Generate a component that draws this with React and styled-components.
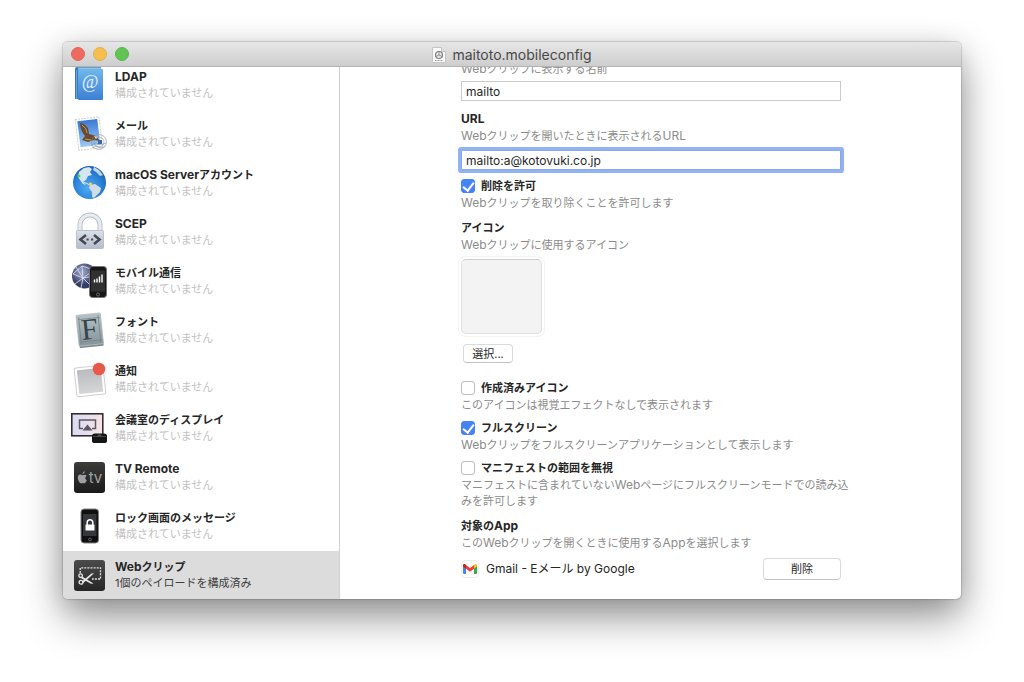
import React, { useState } from 'react';
import styled, { createGlobalStyle, css } from 'styled-components';

const GlobalStyle = createGlobalStyle`
  * {
    box-sizing: border-box;
  }

  body {
    margin: 0;
    background: #fff;
    color: #262626;
    font-family: Inter, 'Noto Sans CJK JP', sans-serif;
    font-size: 11px;
    line-height: 16px;
  }

  button,
  input {
    font-family: inherit;
    color: inherit;
  }
`;

const Desktop = styled.div`
  min-height: 100vh;
  padding: 42px 63px 82px;
`;

const Window = styled.main`
  overflow: hidden;
  border-radius: 5px;
  background: #fff;
  box-shadow:
    0 0 1px 1px rgba(0, 0, 0, 0.14),
    0 18px 40px rgba(0, 0, 0, 0.42),
    0 4px 24px rgba(0, 0, 0, 0.1);
`;

const TitleBar = styled.header`
  position: relative;
  z-index: 1;
  display: grid;
  grid-template-columns: 1fr auto 1fr;
  align-items: center;
  height: 25px;
  padding: 0 8px;
  border-bottom: 1px solid #b3b3b3;
  background: linear-gradient(#e6e6e6, #cecece);
`;

const Lights = styled.div`
  display: flex;
  gap: 8px;
`;

const Light = styled.button`
  width: 14px;
  height: 14px;
  padding: 0;
  border: 1px solid ${({ $edge }) => $edge};
  border-radius: 50%;
  background: ${({ $fill }) => $fill};
`;

const Title = styled.h1`
  display: flex;
  align-items: center;
  gap: 6px;
  margin: 0;
  padding-top: 2px;
  color: #484848;
  font-size: 14px;
  font-weight: 400;
`;

const Body = styled.div`
  display: flex;
  overflow: hidden;
`;

const Sidebar = styled.nav`
  flex: 0 0 277px;
  margin-top: -7px;
  border-right: 1px solid #d0d0d0;
`;

const PayloadList = styled.ul`
  margin: 0;
  padding: 0;
  list-style: none;
`;

const Payload = styled.a`
  display: flex;
  align-items: center;
  gap: 5px;
  height: 49px;
  padding: 0 8px;
  color: inherit;
  text-decoration: none;

  ${({ $selected }) =>
    $selected &&
    css`
      height: 48px;
      margin-top: 1px;
      background: #dcdcdc;
    `}
`;

const PayloadIcon = styled.svg`
  flex: none;
  width: 39px;
  height: 40px;
`;

const PayloadName = styled.strong`
  display: block;
  font-weight: 700;
`;

const PayloadStatus = styled.span`
  display: block;
  color: ${({ $selected }) => ($selected ? '#404040' : '#c2c2c2')};
`;

const Latin = styled.span`
  font-size: 12px;
`;

const Settings = styled.form`
  flex: 1;
  min-width: 0;
  margin-top: -6px;
  padding: 0 99px 19px 121px;
`;

const Group = styled.div`
  margin-bottom: ${({ $space }) => $space || 8}px;
`;

const Label = styled.label`
  display: block;
  font-weight: 700;
  line-height: 18px;
`;

const CheckLabel = styled(Label)`
  display: flex;
  align-items: center;
  gap: 6px;
`;

const Hint = styled.p`
  max-width: 396px;
  margin: 0;
  color: #8b8b8b;
`;

const TextField = styled.input`
  display: block;
  width: 100%;
  max-width: 380px;
  height: 20px;
  margin-top: ${({ $focused }) => ($focused ? 6 : 4)}px;
  padding: 0 4px;
  border: 1px solid #cbcbcb;
  border-radius: 0;
  outline: none;
  background: #fff;
  font-size: 12px;

  ${({ $focused }) =>
    $focused &&
    css`
      border-color: #8aa8ea;
      box-shadow: 0 0 0 3px #93b2f4;
      border-radius: 1px;
    `}
`;

const Checkbox = styled.input`
  flex: none;
  display: grid;
  place-items: center;
  width: 14px;
  height: 14px;
  margin: 0;
  border: 1px solid #bdbdbd;
  border-radius: 3px;
  background: #fff;
  appearance: none;

  &:checked {
    border-color: #4684f6;
    background: #4684f6;
  }

  &:checked::before {
    content: '';
    width: 5px;
    height: 9px;
    margin-bottom: 2px;
    border: solid #fff;
    border-width: 0 2px 2px 0;
    transform: rotate(38deg);
  }
`;

const IconWell = styled.div`
  width: 81px;
  height: 75px;
  margin: 6px 0 10px;
  border: 1px solid #e0e0e0;
  border-top-color: #cfcfcf;
  border-radius: 5px;
  background: #f3f3f3;
  box-shadow: 0 0 0 2px #fff, 0 0 0 3px #f4f4f4;
`;

const PushButton = styled.button`
  height: ${({ $large }) => ($large ? 22 : 19)}px;
  min-width: ${({ $large }) => ($large ? 78 : 50)}px;
  margin-left: ${({ $large }) => ($large ? 0 : 2)}px;
  padding: 0 8px;
  border: 1px solid #dadada;
  border-bottom-color: #c3c3c3;
  border-radius: 4px;
  background: #fff;
  font-size: 11px;
  line-height: 16px;
`;

const TargetApp = styled.div`
  display: flex;
  align-items: center;
  gap: 7px;
  max-width: 380px;
  margin-top: 7px;
  font-size: 12px;
`;

const AppName = styled.span`
  flex: 1;
`;

function Mixed({ text }) {
  return text
    .split(/([A-Za-z][A-Za-z ]*)/)
    .map((part, i) => (i % 2 ? <Latin key={i}>{part}</Latin> : part));
}

const Gradient = ({ id, from, to }) => (
  <linearGradient id={id} x1="0" y1="0" x2="0" y2="1">
    <stop offset="0" stopColor={from} />
    <stop offset="1" stopColor={to} />
  </linearGradient>
);

const LdapIcon = () => (
  <>
    <Gradient id="ldap" from="#70b7ec" to="#3c7fd3" />
    <path d="M4 4q0-2 2-2h24v32H4z" fill="#3b7ab8" />
    <path d="M7 2.500h23v2H7z" fill="#8fc3e6" />
    <rect x="7" y="4" width="25" height="31" rx="1" fill="url(#ldap)" />
    <path d="M5.500 5v29" stroke="#63a5de" />
    <text x="19" y="23" fill="#e4f4ff" fontSize="18" fontFamily="Liberation Serif, serif" fontStyle="italic" textAnchor="middle">@</text>
  </>
);

const MailIcon = () => (
  <>
    <Gradient id="sky" from="#3778d2" to="#9ecbf3" />
    <g transform="rotate(-7 18 20)">
      <rect x="6" y="4" width="24" height="31" fill="#fff" stroke="#d0d0d0" strokeDasharray="2 1" />
      <rect x="8" y="6" width="20" height="26" fill="url(#sky)" />
    </g>
    <path d="M9 9l4 1 4 4 1 6 7 2 4 5-6-1-6 2-6-2 3-4q-5-6-5-13z" fill="#6b4b30" />
    <path d="M11 11q5 3 5 8M14 25l6 1" stroke="#c09a62" fill="none" />
    <path d="M23 22l4 1-2 2z" fill="#f4efe2" />
    <g fill="none" stroke="#8790a0" strokeOpacity=".75" strokeWidth=".8">
      <circle cx="28" cy="28" r="7.500" />
      <circle cx="28" cy="28" r="5" />
      <path d="M20 31l5-2 5 2 5-2M21 34l4-2 5 2 4-2" />
    </g>
    <rect x="27" y="26" width="4" height="4" fill="#3c68a5" />
  </>
);

const GlobeIcon = () => (
  <>
    <radialGradient id="sea" cx=".45" cy=".65" r=".65">
      <stop offset="0" stopColor="#50adf4" />
      <stop offset=".65" stopColor="#2a80d8" />
      <stop offset="1" stopColor="#1a60b4" />
    </radialGradient>
    <circle cx="18.500" cy="19.500" r="16.500" fill="url(#sea)" />
    <path d="M8 9l5-4 5-1 3 2-2 3 2 3-4 1-2 4-3 2 3 3-3-1-3-4-2-3z" fill="#d5e6ef" />
    <path d="M23 4l5 3 4 5-3 1-4-4-3-2z" fill="#bcd8ea" />
    <path d="M12 19l5 2 3 2" stroke="#d5e6ef" fill="none" />
    <path d="M19 22l5-1 6 4-1 4-3 3-3 3-2-1v-5l-3-4z" fill="#d0dde6" />
    <circle cx="8" cy="13" r="1.500" fill="#53d05e" />
    <circle cx="19.500" cy="21" r="1.600" fill="#ffd43b" />
  </>
);

const ScepIcon = () => (
  <>
    <Gradient id="lock" from="#dbe0e9" to="#b4bccb" />
    <path d="M9 19v-6a10 10 0 0 1 20 0v6" fill="none" stroke="#b6bdc8" strokeWidth="5" />
    <path d="M9 19v-6a10 10 0 0 1 20 0v6" fill="none" stroke="#e8ebf0" strokeWidth="3.200" />
    <rect x="5.500" y="18.500" width="27" height="18" rx="1" fill="url(#lock)" stroke="#b9c0cc" />
    <path d="M15 23l-5.500 4.500 5.500 4.500M23 23l5.500 4.500-5.500 4.500" fill="none" stroke="#454a53" strokeWidth="2.600" />
    <path d="M15.500 26.500h2.200v2h-2.200zM20 26.500h2.200v2H20z" fill="#454a53" />
  </>
);

const CellularIcon = () => (
  <>
    <radialGradient id="net" cx=".4" cy=".35">
      <stop offset="0" stopColor="#a6aed2" />
      <stop offset="1" stopColor="#343d68" />
    </radialGradient>
    <circle cx="13.500" cy="15" r="12.500" fill="url(#net)" />
    <path d="M2 13l9-8 12 4M4 23l8-6 11-8M11 5l1 12 8 8M2 13l10 4M12 17l-2 10M5 6l7 11 11-2" stroke="#e4e7f4" strokeWidth=".8" fill="none" />
    <rect x="18.500" y="5.500" width="17" height="31" rx="3" fill="#171717" stroke="#777" />
    <path d="M20 9.500h14v21H20z" fill="#313131" />
    <path d="M23.500 21.500v-3M26 21.500v-4M28.500 21.500v-6M31 21.500v-8" stroke="#fff" strokeWidth="1.400" />
    <circle cx="27" cy="33.500" r="1.500" fill="none" stroke="#666" />
  </>
);

const FontIcon = () => (
  <>
    <Gradient id="plate" from="#b4c1c5" to="#87959b" />
    <g transform="rotate(-6 19 20)">
      <rect x="7" y="5" width="24" height="32" rx="1" fill="#7b878d" />
      <rect x="6.500" y="4" width="24.500" height="31" rx="1" fill="url(#plate)" stroke="#b7c2c6" strokeWidth=".8" />
      <path d="M9 6v27M28.500 6v27M8 8.500h22M8 31h22" stroke="#728189" strokeWidth=".7" />
      <text x="18.500" y="29" fill="#37444b" fontFamily="Liberation Serif, serif" fontSize="30" textAnchor="middle">F</text>
    </g>
  </>
);

const NoticeIcon = () => (
  <>
    <Gradient id="notice" from="#b9bbbe" to="#d5d6d8" />
    <rect x="4.500" y="7.500" width="29" height="29" rx="2" fill="#fff" stroke="#cfcfcf" transform="rotate(-6 19 22)" />
    <rect x="7" y="10" width="24" height="24" rx="1" fill="url(#notice)" transform="rotate(-6 19 22)" />
    <circle cx="28" cy="10" r="6.300" fill="#e8594b" />
  </>
);

const DisplayIcon = () => (
  <>
    <linearGradient id="screen">
      <stop offset="0" stopColor="#d9dcf5" />
      <stop offset="1" stopColor="#f5e4e4" />
    </linearGradient>
    <rect x=".8" y="5.800" width="31" height="22" fill="url(#screen)" stroke="#28242a" strokeWidth="1.500" />
    <path d="M12 20.500H8.500v-8.500h16v8.500H21" fill="none" stroke="#5f5864" strokeWidth="1.500" />
    <path d="M16.500 16.500l5 6h-10z" fill="#5f5864" />
    <path d="M21 28q0-2.500 3-2.500h9q3 0 3 2.500v5q0 2-3 2h-9q-3 0-3-2z" fill="#151515" />
    <path d="M22 28.500h13" stroke="#444" />
    <ellipse cx="28.500" cy="27.500" rx="2" ry="1" fill="#555" />
  </>
);

const TvIcon = () => (
  <>
    <Gradient id="tv" from="#3b3b3b" to="#1a1a1a" />
    <rect x="3" y="5" width="31" height="31" rx="3" fill="url(#tv)" />
    <path d="M11.400 17.200q0-2.700 2.400-3.300 0 2.800-2.400 3.300zM15.600 18.800q-1.300-1.600-3.900-.6-4.900-2-4.900 2.900 0 2.600 1.900 4.700 1.100 1 2.800.1 1.600.9 2.800-.2 1-1.100 1.500-2.500-3-1.700-.2-4.400z" fill="#a0a0a0" />
    <text x="24.500" y="26" fill="#a0a0a0" fontSize="15" fontFamily="Inter, sans-serif" textAnchor="middle">tv</text>
  </>
);

const LockScreenIcon = () => (
  <>
    <rect x="10" y="3" width="17.500" height="34" rx="3" fill="#101010" stroke="#858585" />
    <path d="M12 8h13.500v22H12z" fill="#34373b" />
    <path d="M16.200 19v-2.500a2.800 2.800 0 0 1 5.600 0V19" fill="none" stroke="#fff" strokeWidth="1.500" />
    <rect x="14.500" y="18.500" width="9" height="6" rx=".5" fill="#fff" />
    <circle cx="19" cy="33.500" r="1.400" fill="none" stroke="#666" />
  </>
);

const WebClipIcon = () => (
  <>
    <Gradient id="clip" from="#4b4b4b" to="#262626" />
    <rect x="3" y="5" width="31" height="31" rx="3" fill="url(#clip)" />
    <path d="M9.200 18v-5.200h20.300V24H21" fill="none" stroke="#e4e4e4" strokeWidth="1.300" strokeDasharray="2 1.100" />
    <path d="M11 21.500l11.500 7-2.500.2-9.500-5.200zM11 26.500l9.500-8 2.500-.2-11 10z" fill="#e8e8e8" />
    <g fill="none" stroke="#e8e8e8" strokeWidth="1.300">
      <circle cx="9.600" cy="20.700" r="1.800" />
      <circle cx="10" cy="27.300" r="1.900" />
    </g>
  </>
);

const payloads = [
  { name: 'LDAP', icon: LdapIcon },
  { name: 'メール', icon: MailIcon },
  { name: 'macOS Serverアカウント', icon: GlobeIcon },
  { name: 'SCEP', icon: ScepIcon },
  { name: 'モバイル通信', icon: CellularIcon },
  { name: 'フォント', icon: FontIcon },
  { name: '通知', icon: NoticeIcon },
  { name: '会議室のディスプレイ', icon: DisplayIcon },
  { name: 'TV Remote', icon: TvIcon },
  { name: 'ロック画面のメッセージ', icon: LockScreenIcon },
  { name: 'Webクリップ', icon: WebClipIcon, status: '1個のペイロードを構成済み' },
];

function FileIcon() {
  return (
    <svg width="14" height="16" viewBox="0 0 14 16" aria-hidden="true">
      <path d="M.5.500h9l4 4v11H.500z" fill="#fafafa" stroke="#c4c4c4" />
      <path d="M9.500.500v4h4" fill="#e6e6e6" stroke="#c4c4c4" />
      <circle cx="7" cy="8" r="3.500" fill="#e6e6e6" stroke="#808080" strokeWidth="1.200" />
      <path d="M7 8V4.500M7 8l3 1.500M7 8L4 9.500" stroke="#808080" strokeWidth=".8" />
      <path d="M3 13.500h8" stroke="#999" strokeDasharray="1 .5" />
    </svg>
  );
}

function GmailIcon() {
  return (
    <svg width="18" height="18" viewBox="0 0 18 18" aria-hidden="true">
      <rect x=".5" y=".5" width="17" height="17" rx="3.500" fill="#fff" stroke="#ececec" />
      <path d="M2 5.500l3 2.200V14H3q-1 0-1-1z" fill="#4285f4" />
      <path d="M16 5.500l-3 2.200V14h2q1 0 1-1z" fill="#34a853" />
      <path d="M13 5l1-.8q2-.8 2 1.300v1l-3 2.300z" fill="#fbbc04" />
      <path d="M2 5.500q0-2.100 2-1.300l5 3.800 4-3v3.800l-4 3-4-3L2 6.500z" fill="#ea4335" />
      <path d="M2 5.500q0-2.100 2-1.300L5 5v3.800L2 6.500z" fill="#c5221f" />
    </svg>
  );
}

function CheckOption({ id, label, hint, checked, space }) {
  const [on, setOn] = useState(checked);

  return (
    <Group $space={space}>
      <CheckLabel htmlFor={id}>
        <Checkbox id={id} type="checkbox" checked={on} onChange={() => setOn(!on)} />
        {label}
      </CheckLabel>
      <Hint>
        <Mixed text={hint} />
      </Hint>
    </Group>
  );
}

function App() {
  const [name, setName] = useState('mailto');
  const [url, setUrl] = useState('mailto:a@kotovuki.co.jp');

  return (
    <Desktop>
      <GlobalStyle />
      <Window>
        <TitleBar>
          <Lights>
            <Light aria-label="閉じる" $fill="#ee6a5f" $edge="#e0655b" />
            <Light aria-label="しまう" $fill="#f5be4f" $edge="#e0b04e" />
            <Light aria-label="拡大" $fill="#61c554" $edge="#5ab44e" />
          </Lights>
          <Title>
            <FileIcon />
            maitoto.mobileconfig
          </Title>
        </TitleBar>
        <Body>
          <Sidebar>
            <PayloadList>
              {payloads.map(({ name: payload, icon: Icon, status }) => (
                <li key={payload}>
                  <Payload href="#" $selected={Boolean(status)}>
                    <PayloadIcon viewBox="0 0 39 40" aria-hidden="true">
                      <Icon />
                    </PayloadIcon>
                    <div>
                      <PayloadName>
                        <Mixed text={payload} />
                      </PayloadName>
                      <PayloadStatus $selected={Boolean(status)}>
                        {status || '構成されていません'}
                      </PayloadStatus>
                    </div>
                  </Payload>
                </li>
              ))}
            </PayloadList>
          </Sidebar>
          <Settings>
            <Group $space={9}>
              <Hint id="name-hint">
                <Mixed text="Webクリップに表示する名前" />
              </Hint>
              <TextField
                aria-labelledby="name-hint"
                value={name}
                onChange={(e) => setName(e.target.value)}
              />
            </Group>
            <Group $space={7}>
              <Label htmlFor="url">
                <Mixed text="URL" />
              </Label>
              <Hint>
                <Mixed text="Webクリップを開いたときに表示されるURL" />
              </Hint>
              <TextField id="url" $focused value={url} onChange={(e) => setUrl(e.target.value)} />
            </Group>
            <CheckOption
              id="removable"
              label="削除を許可"
              hint="Webクリップを取り除くことを許可します"
              checked
            />
            <Group $space={16}>
              <Label htmlFor="choose">アイコン</Label>
              <Hint>
                <Mixed text="Webクリップに使用するアイコン" />
              </Hint>
              <IconWell />
              <PushButton id="choose" type="button">
                選択...
              </PushButton>
            </Group>
            <CheckOption
              id="precomposed"
              label="作成済みアイコン"
              hint="このアイコンは視覚エフェクトなしで表示されます"
              checked={false}
              space={6}
            />
            <CheckOption
              id="fullscreen"
              label="フルスクリーン"
              hint="Webクリップをフルスクリーンアプリケーションとして表示します"
              checked
              space={6}
            />
            <CheckOption
              id="scope"
              label="マニフェストの範囲を無視"
              hint="マニフェストに含まれていないWebページにフルスクリーンモードでの読み込みを許可します"
              checked={false}
            />
            <Label htmlFor="remove">
              <Mixed text="対象のApp" />
            </Label>
            <Hint>
              <Mixed text="このWebクリップを開くときに使用するAppを選択します" />
            </Hint>
            <TargetApp>
              <GmailIcon />
              <AppName>Gmail - Eメール by Google</AppName>
              <PushButton id="remove" type="button" $large>
                削除
              </PushButton>
            </TargetApp>
          </Settings>
        </Body>
      </Window>
    </Desktop>
  );
}

export default App;
